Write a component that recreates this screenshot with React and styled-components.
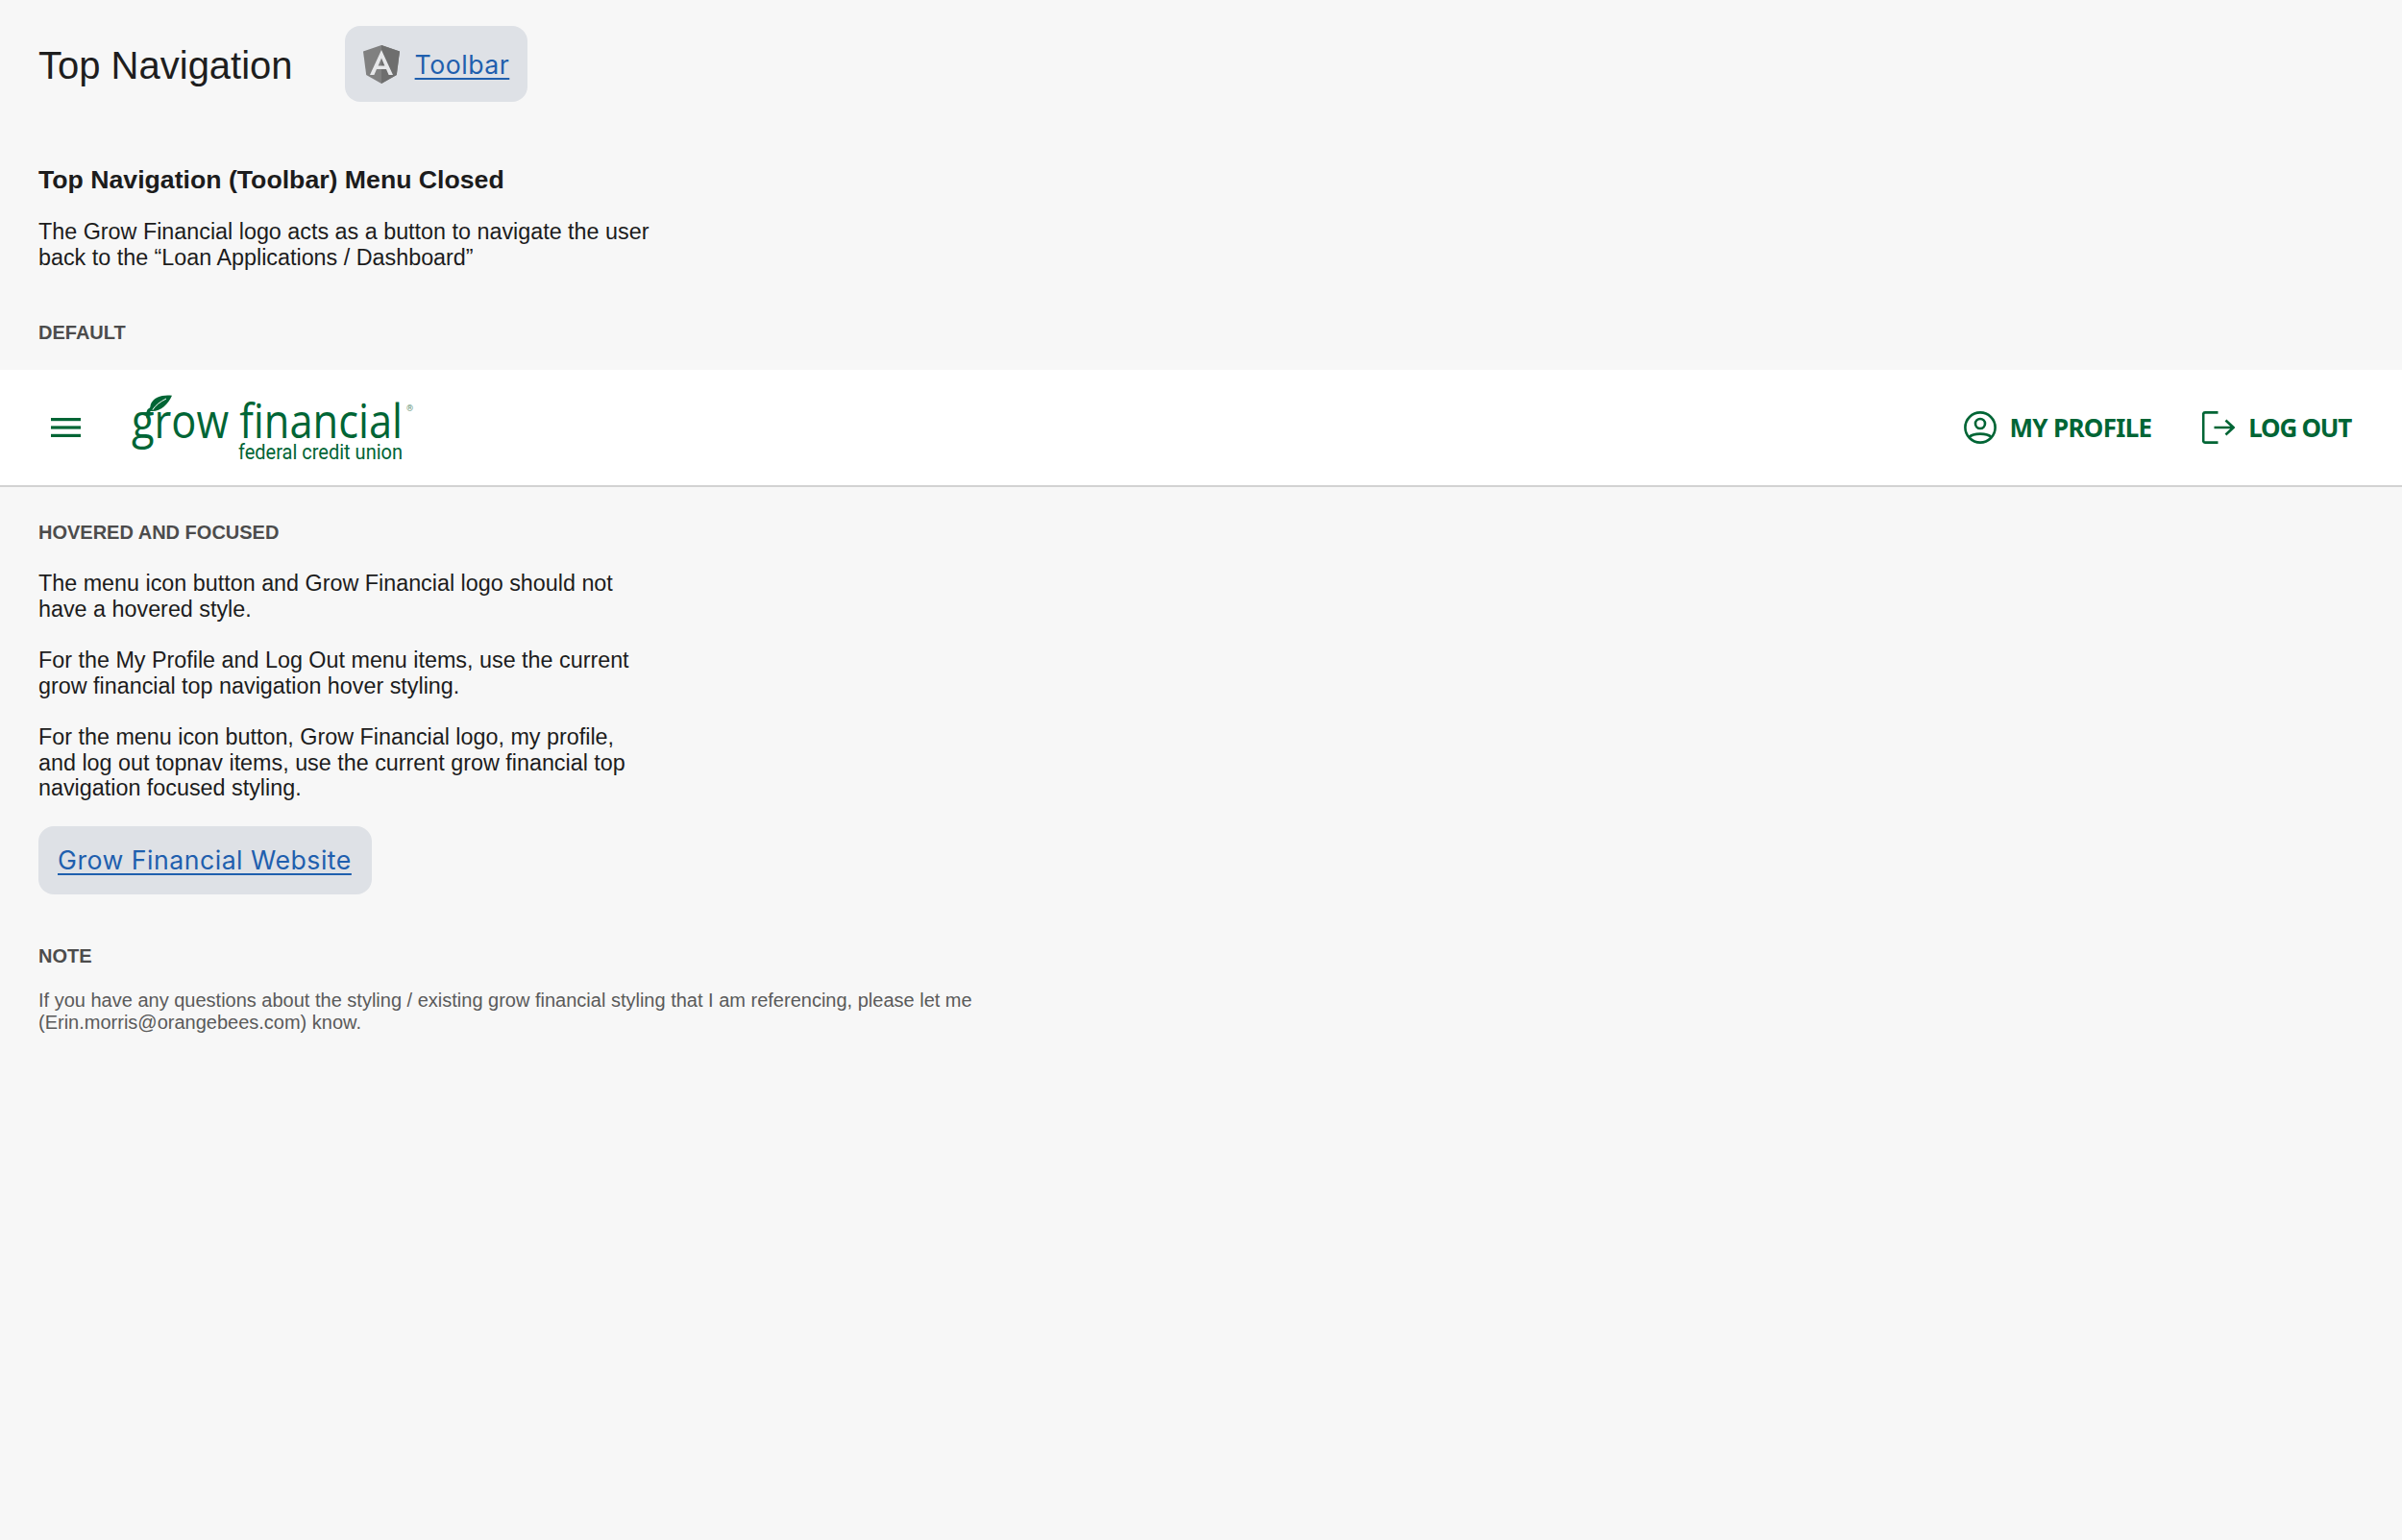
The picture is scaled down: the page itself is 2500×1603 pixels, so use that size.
import React from "react";
import styled, { createGlobalStyle } from "styled-components";

const GREEN = "#006535";

const Global = createGlobalStyle`
  html, body { margin: 0; padding: 0; background: #f7f7f7; }
  body { font-family: "Liberation Sans", Arial, sans-serif; color: #1c1c1c; min-height: 1603px; }
`;

const Page = styled.div`
  display: flex;
  flex-direction: column;
`;

const Section = styled.section`
  padding: ${(p) => p.$padding};
`;

const TitleRow = styled.header`
  display: flex;
  align-items: flex-start;
  gap: 54px;
  padding: 27px 40px 0;
`;

const Title = styled.h1`
  margin: 0;
  font-size: 40px;
  line-height: 82px;
  font-weight: 400;
  color: #1e1e1e;
`;

const Chip = styled.div`
  display: ${(p) => (p.$block ? "flex" : "inline-flex")};
  align-items: center;
  gap: 16px;
  box-sizing: border-box;
  width: ${(p) => p.$width}px;
  height: ${(p) => p.$height}px;
  margin-top: ${(p) => p.$top || 0}px;
  padding-left: ${(p) => p.$pad}px;
  background: #dee1e6;
  border-radius: 16px;
`;

const DocLink = styled.a`
  font-family: Inter, "Noto Sans", sans-serif;
  font-size: 26.67px;
  letter-spacing: 0.5px;
  color: #1f5fae;
  text-decoration: underline;
  text-underline-offset: 4px;
  text-decoration-thickness: 2px;
`;

const Heading = styled.h2`
  margin: 0;
  font-size: 26.67px;
  line-height: 32px;
  font-weight: 700;
  color: #1c1c1c;
`;

const Body = styled.p`
  margin: ${(p) => p.$margin || "0"};
  font-size: 23.33px;
  line-height: 26.67px;
  color: #1c1c1c;
`;

const Label = styled.h3`
  margin: ${(p) => p.$top || 0}px 0 0;
  font-size: 20px;
  line-height: 24px;
  font-weight: 700;
  color: #4c4c4c;
`;

const Note = styled.p`
  margin: 23px 0 0;
  font-size: 20px;
  line-height: 23.3px;
  color: #5a5a5a;
`;

const Toolbar = styled.nav`
  display: flex;
  align-items: center;
  height: 120px;
  margin-top: 26.7px;
  padding: 0 53px;
  background: #fff;
  border-bottom: 2px solid #d2d2d2;
`;

const MenuButton = styled.button`
  display: flex;
  padding: 0;
  border: 0;
  background: none;
  margin-right: 53px;
`;

const LogoLink = styled.a`
  display: block;
  width: 296px;
  height: 70px;
  margin-top: 2px;
`;

const LogoArt = styled.svg`
  display: block;
  overflow: visible;
`;

const Spacer = styled.div`
  flex: 1;
`;

const NavItem = styled.a`
  display: flex;
  align-items: center;
  gap: ${(p) => p.$gap}px;
  margin-left: ${(p) => p.$left || 0}px;
  font-family: "Noto Sans", sans-serif;
  font-weight: 700;
  font-size: 26px;
  letter-spacing: ${(p) => p.$spacing}px;
  color: ${GREEN};
  white-space: nowrap;
`;

const AngularIcon = () => (
  <svg width="38" height="40" viewBox="0 0 38 40">
    <path d="M19 0 L38 6.5 L34.8 31 L19 40 L3.2 31 L0 6.5 Z" fill="#808080" />
    <path d="M19 0 L38 6.5 L34.8 31 L19 40 Z" fill="#6e6e6e" />
    <path d="M19 5 L7 31 H11.4 L14 25 H24 L26.6 31 H31 Z M15.6 21.5 L19 13.6 L22.4 21.5 Z" fill="#e6e7e9" fillRule="evenodd" />
  </svg>
);

const MenuIcon = () => (
  <svg width="31" height="20" viewBox="0 0 31 20" fill={GREEN}>
    <rect width="31" height="3.2" y="0" />
    <rect width="31" height="3.2" y="8.4" />
    <rect width="31" height="3.2" y="16.8" />
  </svg>
);

const Logo = () => (
  <LogoArt width="296" height="70" viewBox="0 0 296 70" fill={GREEN}>
    <path d="M42 .8 C33 -.4 22.5 2 19.8 10 C19 13 19 15.5 20.5 17 C30 17.5 38 10 42 .8 Z" />
    <path d="M36 4 C30 7 25 10.5 21.5 16" stroke="#fff" strokeWidth="1" fill="none" />
    <path d="M17 24 C16 20 17 16 21 14" stroke={GREEN} strokeWidth="3.2" fill="none" />
    <text x="0" y="45" fontFamily="'Open Sans', sans-serif" fontWeight="400" fontSize="49" textLength="282" lengthAdjust="spacingAndGlyphs">grow financial</text>
    <text x="111" y="67" fontFamily="Roboto, sans-serif" fontWeight="400" fontSize="22" textLength="171" lengthAdjust="spacingAndGlyphs">federal credit union</text>
    <text x="286" y="17" fontFamily="Roboto, sans-serif" fontSize="9" fill="#5f9476">®</text>
  </LogoArt>
);

const ProfileIcon = () => (
  <svg width="34" height="34" viewBox="0 0 34 34" fill="none" stroke={GREEN} strokeWidth="2.6">
    <circle cx="17" cy="17" r="15.6" />
    <circle cx="17" cy="13" r="5" />
    <path d="M5.5 27 C10 22.5 24 22.5 28.5 27" />
  </svg>
);

const LogoutIcon = () => (
  <svg width="34" height="34" viewBox="0 0 34 34" fill="none" stroke={GREEN} strokeWidth="2.6">
    <path d="M16.5 1.4 H3 Q1.2 1.4 1.2 3.2 V30.8 Q1.2 32.6 3 32.6 H16.5" />
    <path d="M12.5 17 H33 M24.5 9.5 L32.5 17 L24.5 24.5" />
  </svg>
);

export default function App() {
  return (
    <Page>
      <Global />
      <TitleRow>
        <Title>Top Navigation</Title>
        <Chip $width={190} $height={79} $pad={19}>
          <AngularIcon />
          <DocLink href="#">Toolbar</DocLink>
        </Chip>
      </TitleRow>
      <Section $padding="62px 40px 0">
        <Heading>Top Navigation (Toolbar) Menu Closed</Heading>
        <Body $margin="25px 0 0">
          The Grow Financial logo acts as a button to navigate the user
          <br />
          back to the “Loan Applications / Dashboard”
        </Body>
        <Label $top={53}>DEFAULT</Label>
      </Section>
      <Toolbar>
        <MenuButton aria-label="Menu"><MenuIcon /></MenuButton>
        <LogoLink href="#" aria-label="Grow Financial"><Logo /></LogoLink>
        <Spacer />
        <NavItem $gap={14} $spacing={-0.7}><ProfileIcon />MY PROFILE</NavItem>
        <NavItem $gap={14} $left={53} $spacing={-1.25}><LogoutIcon />LOG OUT</NavItem>
      </Toolbar>
      <Section $padding="35.3px 40px 0">
        <Label>HOVERED AND FOCUSED</Label>
        <Body $margin="27.7px 0 0">
          The menu icon button and Grow Financial logo should not
          <br />
          have a hovered style.
        </Body>
        <Body $margin="26.67px 0 0">
          For the My Profile and Log Out menu items, use the current
          <br />
          grow financial top navigation hover styling.
        </Body>
        <Body $margin="26.67px 0 0">
          For the menu icon button, Grow Financial logo, my profile,
          <br />
          and log out topnav items, use the current grow financial top
          <br />
          navigation focused styling.
        </Body>
        <Chip $block $width={347} $height={71} $pad={20} $top={25.5}>
          <DocLink href="#">Grow Financial Website</DocLink>
        </Chip>
        <Label $top={52.5}>NOTE</Label>
        <Note>
          If you have any questions about the styling / existing grow financial styling that I am referencing, please let me
          <br />
          (Erin.morris@orangebees.com) know.
        </Note>
      </Section>
    </Page>
  );
}
